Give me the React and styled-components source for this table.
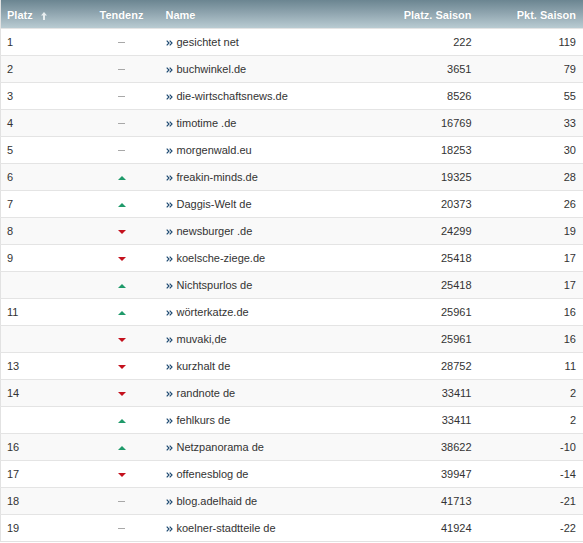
import React from "react";
import styled, { createGlobalStyle } from "styled-components";

const Global = createGlobalStyle`
  html, body { margin: 0; padding: 0; background: #fff; }
  body { font-family: "Liberation Sans", Arial, sans-serif; }
`;

const Table = styled.table`
  width: 583px;
  border-collapse: collapse;
  table-layout: fixed;
  font-size: 11px;
  color: #333;
  border-left: 1px solid #e2e2e2;
  border-right: 1px solid #e2e2e2;
  border-bottom: 1px solid #e2e2e2;
`;

const HeadRow = styled.tr`
  background: linear-gradient(to bottom, #6b8591 0%, #8ea4ae 45%, #b9cbd2 100%);
  height: 28px;
`;

const Th = styled.th`
  padding: 3px ${(p) => (p.$last ? "7px" : "6px")} 0 6px;
  color: #fff;
  font-weight: bold;
  font-size: 11px;
  text-align: ${(p) => p.$align || "left"};
  text-shadow: 0 0 1px rgba(0, 0, 0, 0.15);
  white-space: nowrap;
`;

const Row = styled.tr`
  height: 27px;
  background: ${(p) => (p.$odd ? "#f9f9f9" : "#fff")};
  border-top: 1px solid #e4e4e4;
`;

const Td = styled.td`
  padding: 0 ${(p) => (p.$last ? "7px" : "6px")} 0 6px;
  text-align: ${(p) => p.$align || "left"};
  white-space: nowrap;
`;

const Chev = styled.svg`
  display: inline-block;
  vertical-align: 0;
  margin-right: 4px;
`;

const Dash = styled.span`
  display: inline-block;
  width: 7px;
  height: 1px;
  background: #a8a8a8;
  vertical-align: middle;
`;

const Tri = styled.span`
  display: inline-block;
  width: 0;
  height: 0;
  border-left: 4px solid transparent;
  border-right: 4px solid transparent;
  ${(p) =>
    p.$up
      ? "border-bottom: 4px solid #1f9a6a;"
      : "border-top: 4px solid #c4111d;"}
  vertical-align: middle;
`;

const SortIcon = styled.svg`
  margin-left: 8px;
  vertical-align: -1px;
`;

const Chevrons = () => (
  <Chev width="7" height="6" viewBox="0 0 7 6">
    <path d="M0.7 0.6 L3 3 L0.7 5.4" fill="none" stroke="#1e4a72" strokeWidth="1.2" />
    <path d="M3.7 0.6 L6 3 L3.7 5.4" fill="none" stroke="#1e4a72" strokeWidth="1.2" />
  </Chev>
);

const data = [
  ["1", "0", "gesichtet net", "222", "119"],
  ["2", "0", "buchwinkel.de", "3651", "79"],
  ["3", "0", "die-wirtschaftsnews.de", "8526", "55"],
  ["4", "0", "timotime .de", "16769", "33"],
  ["5", "0", "morgenwald.eu", "18253", "30"],
  ["6", "u", "freakin-minds.de", "19325", "28"],
  ["7", "u", "Daggis-Welt de", "20373", "26"],
  ["8", "d", "newsburger .de", "24299", "19"],
  ["9", "d", "koelsche-ziege.de", "25418", "17"],
  ["", "u", "Nichtspurlos de", "25418", "17"],
  ["11", "u", "wörterkatze.de", "25961", "16"],
  ["", "d", "muvaki,de", "25961", "16"],
  ["13", "d", "kurzhalt de", "28752", "11"],
  ["14", "d", "randnote de", "33411", "2"],
  ["", "u", "fehlkurs de", "33411", "2"],
  ["16", "u", "Netzpanorama de", "38622", "-10"],
  ["17", "d", "offenesblog de", "39947", "-14"],
  ["18", "0", "blog.adelhaid de", "41713", "-21"],
  ["19", "0", "koelner-stadtteile de", "41924", "-22"],
];

const Trend = ({ t }) =>
  t === "0" ? <Dash /> : <Tri $up={t === "u"} />;

export default function App() {
  return (
    <>
      <Global />
      <Table>
        <colgroup>
          <col style={{ width: 83 }} />
          <col style={{ width: 76 }} />
          <col style={{ width: 218 }} />
          <col style={{ width: 100 }} />
          <col style={{ width: 106 }} />
        </colgroup>
        <thead>
          <HeadRow>
            <Th>
              Platz
              <SortIcon width="6" height="8" viewBox="0 0 6 8">
                <path d="M3 0 L6 3.5 L4 3.5 L4 8 L2 8 L2 3.5 L0 3.5 Z" fill="#e8eef0" />
              </SortIcon>
            </Th>
            <Th $align="center">Tendenz</Th>
            <Th>Name</Th>
            <Th $align="right">Platz. Saison</Th>
            <Th $align="right" $last>Pkt. Saison</Th>
          </HeadRow>
        </thead>
        <tbody>
          {data.map((r, i) => (
            <Row key={i} $odd={i % 2 === 1}>
              <Td>{r[0]}</Td>
              <Td $align="center">
                <Trend t={r[1]} />
              </Td>
              <Td>
                <Chevrons />
                {r[2]}
              </Td>
              <Td $align="right">{r[3]}</Td>
              <Td $align="right" $last>{r[4]}</Td>
            </Row>
          ))}
        </tbody>
      </Table>
    </>
  );
}
